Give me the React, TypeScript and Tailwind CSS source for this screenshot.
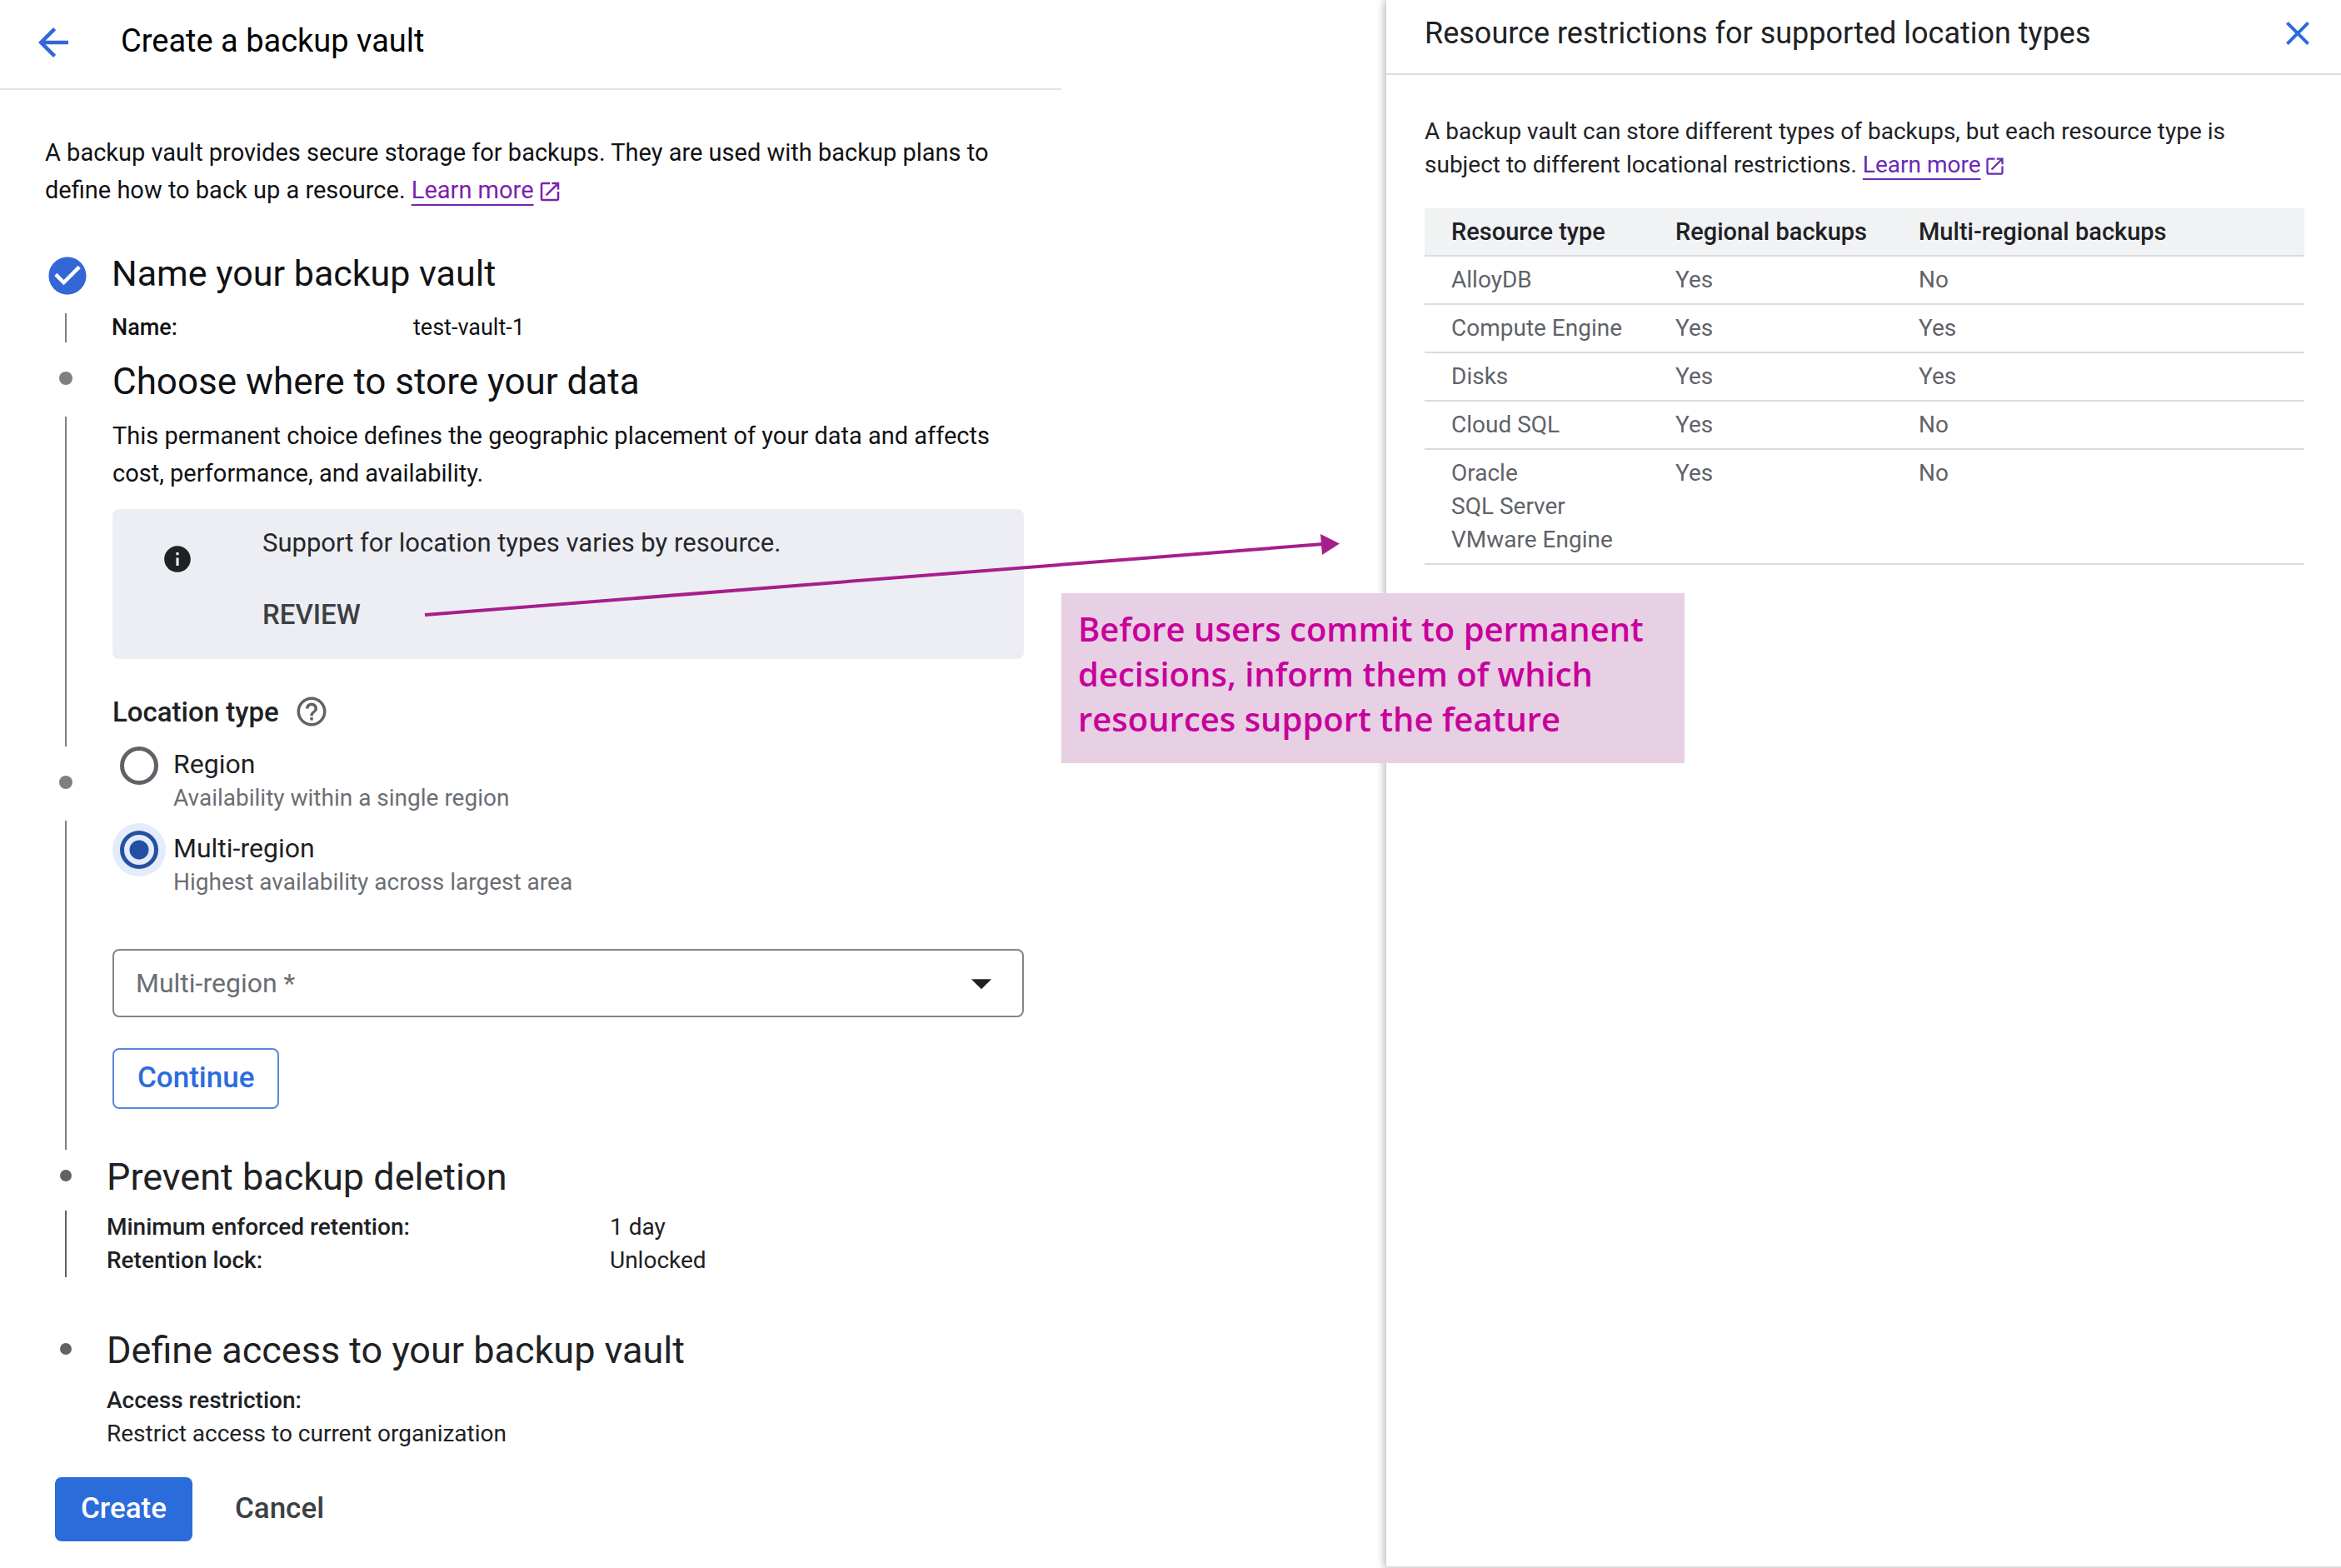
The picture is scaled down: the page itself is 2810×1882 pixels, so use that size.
import { useState } from 'react';
import type { ReactNode } from 'react';
import {
  MdArrowBack,
  MdArrowDropDown,
  MdCheckCircle,
  MdClose,
  MdHelpOutline,
  MdInfo,
  MdOpenInNew,
} from 'react-icons/md';

const locationTypes = [
  { id: 'region', label: 'Region', hint: 'Availability within a single region' },
  { id: 'multi-region', label: 'Multi-region', hint: 'Highest availability across largest area' },
];

const restrictions = [
  { resources: ['AlloyDB'], regional: 'Yes', multiRegional: 'No' },
  { resources: ['Compute Engine'], regional: 'Yes', multiRegional: 'Yes' },
  { resources: ['Disks'], regional: 'Yes', multiRegional: 'Yes' },
  { resources: ['Cloud SQL'], regional: 'Yes', multiRegional: 'No' },
  { resources: ['Oracle', 'SQL Server', 'VMware Engine'], regional: 'Yes', multiRegional: 'No' },
];

const LearnMore = ({ className, iconClassName }: { className: string; iconClassName: string }) => (
  <a href="#learn-more" className={`whitespace-nowrap ${className}`}>
    <span className="underline decoration-2 underline-offset-[7px] [text-decoration-skip-ink:none]">Learn more</span>
    <MdOpenInNew className={`ml-1 inline ${iconClassName}`} />
  </a>
);

const Step = ({
  title,
  rail,
  className,
  children,
}: {
  title: string;
  rail: ReactNode;
  className: string;
  children: ReactNode;
}) => (
  <section className={`flex ${className}`}>
    <div className="flex w-[50px] shrink-0 flex-col items-center">{rail}</div>
    <div className="min-w-0 flex-1">
      <h2 className="leading-[56px]">{title}</h2>
      {children}
    </div>
  </section>
);

const Detail = ({ name, value }: { name: string; value: string }) => (
  <>
    <dt className="font-medium">{name}</dt>
    <dd>{value}</dd>
  </>
);

const VaultForm = () => {
  const [locationType, setLocationType] = useState('multi-region');

  return (
    <main className="text-[29px] text-[#111214]">
      <header className="flex h-[108px] items-center gap-[54px] border-b-2 border-[#e3e4e6] pb-1 pl-[37px]">
        <button type="button" aria-label="Back" className="text-[#3367d6]">
          <MdArrowBack className="size-[54px]" />
        </button>
        <h1 className="pb-1 text-[38px] leading-[48px] text-black">Create a backup vault</h1>
      </header>

      <form className="pr-[45px] pb-[30px] pl-[54px]" onSubmit={(e) => e.preventDefault()}>
        <p className="pt-[53px] leading-[45px]">
          A backup vault provides secure storage for backups. They are used with backup plans to
          define how to back up a resource.{' '}
          <LearnMore className="text-[#7b22ad]" iconClassName="size-[30px]" />
        </p>

        <div className="pt-[49px]">
          <Step
            title="Name your backup vault"
            className="gap-[30px] text-[43px]"
            rail={
              <>
                <MdCheckCircle className="mt-1 ml-1 size-[54px] shrink-0 text-[#3367d6]" />
                <span className="mt-[18px] mb-[19px] w-[2px] flex-1 bg-[#808080]" />
              </>
            }
          >
            <dl className="grid grid-cols-[362px_1fr] pt-[17px] pb-[17px] text-[27px] leading-[40px]">
              <Detail name="Name:" value="test-vault-1" />
            </dl>
          </Step>

          <Step
            title="Choose where to store your data"
            className="gap-[31px] text-[44px]"
            rail={
              <>
                <span className="mt-4 size-4 rounded-full bg-[#808080]" />
                <span className="mt-[38px] mb-[35px] w-[2px] flex-1 bg-[#808080]" />
                <span className="size-4 rounded-full bg-[#808080]" />
                <span className="mt-[38px] mb-[5px] w-[2px] flex-1 bg-[#808080]" />
              </>
            }
          >
            <p className="pt-[15px] pb-5 text-[29px] leading-[45px]">
              This permanent choice defines the geographic placement of your data and affects cost,
              performance, and availability.
            </p>

            <div className="flex gap-[83px] rounded-lg bg-[#edeef3] pt-[21px] pb-[33px] pl-[59px] text-[#26272b]">
              <MdInfo className="mt-5 size-[38px] text-[#202124]" />
              <div className="flex flex-col items-start gap-[46px] text-[31px] leading-[40px]">
                <p>Support for location types varies by resource.</p>
                <button type="button" className="text-[33px] font-medium text-[#3c4043]">
                  REVIEW
                </button>
              </div>
            </div>

            <fieldset className="mt-[42px] text-[#202124]">
              <legend className="text-[33px] leading-[40px] font-medium">
                Location type
                <button type="button" aria-label="Help" className="ml-[18px] align-bottom text-[#5f6368]">
                  <MdHelpOutline className="size-[42px]" />
                </button>
              </legend>
              <div className="flex flex-col gap-[19px] pt-[21px]">
                {locationTypes.map(({ id, label, hint }) => (
                  <div key={id} className="flex gap-[18px] pl-[9px]">
                    <input
                      type="radio"
                      id={id}
                      name="location-type"
                      checked={locationType === id}
                      onChange={() => setLocationType(id)}
                      className="size-[46px] shrink-0 appearance-none rounded-full border-[5px] border-[#5f6368] checked:border-[#2450a4] checked:bg-[radial-gradient(circle,#2450a4_11px,#e4ecfb_12px)] checked:ring-9 checked:ring-[#e4ecfb]"
                    />
                    <label htmlFor={id}>
                      <span className="block text-[32px] leading-[42px]">{label}</span>
                      <span className="block text-[28px] leading-[40px] text-[#6b6e73]">{hint}</span>
                    </label>
                  </div>
                ))}
              </div>
            </fieldset>

            <div className="relative mt-[60px]">
              <select
                aria-label="Multi-region"
                defaultValue=""
                className="block h-[82px] w-full appearance-none rounded-lg border-2 border-[#80868b] bg-white pl-[26px] text-[32px] text-[#6b6e73]"
              >
                <option value="">Multi-region *</option>
                <option value="us">us</option>
                <option value="eu">eu</option>
              </select>
              <MdArrowDropDown className="pointer-events-none absolute top-3 right-[22px] size-[58px] text-[#202124]" />
            </div>

            <div className="flex pt-[37px] pb-[54px]">
              <button
                type="button"
                className="h-[73px] rounded-lg border-2 border-[#5b85d9] px-7 text-[35px] font-medium text-[#2b6cdb]"
              >
                Continue
              </button>
            </div>
          </Step>

          <Step
            title="Prevent backup deletion"
            className="gap-6 text-[45px] text-[#202124]"
            rail={
              <>
                <span className="mt-[19px] size-[14px] rounded-full bg-[#5f6368]" />
                <span className="mt-[35px] mb-[60px] w-[2px] flex-1 bg-[#5f6368]" />
              </>
            }
          >
            <dl className="grid grid-cols-[604px_1fr] pt-3 pb-[60px] text-[28px] leading-[40px]">
              <Detail name="Minimum enforced retention:" value="1 day" />
              <Detail name="Retention lock:" value="Unlocked" />
            </dl>
          </Step>

          <Step
            title="Define access to your backup vault"
            className="gap-6 text-[45px] text-[#202124]"
            rail={<span className="mt-[19px] size-[14px] rounded-full bg-[#5f6368]" />}
          >
            <dl className="pt-3 text-[28px] leading-[40px]">
              <Detail name="Access restriction:" value="Restrict access to current organization" />
            </dl>
          </Step>
        </div>

        <div className="flex gap-5 pt-[32px] pl-3 text-[35px] font-medium">
          <button type="submit" className="h-[77px] rounded-lg bg-[#2b6cdb] px-[31px] text-white">
            Create
          </button>
          <button type="button" className="h-[77px] px-[31px] text-[#3c4043]">
            Cancel
          </button>
        </div>
      </form>
    </main>
  );
};

const RestrictionsPanel = () => (
  <aside className="border-b-2 border-[#dadce0] bg-white text-[28px] text-[#202124] shadow-[-2px_0_10px_rgba(0,0,0,0.3)]">
    <header className="flex h-[90px] items-center justify-between border-b-2 border-[#dadce0] pr-7 pb-2 pl-[46px]">
      <h2 className="text-[36px] leading-[48px]">Resource restrictions for supported location types</h2>
      <button type="button" aria-label="Close" className="text-[#2b6cdb]">
        <MdClose className="size-12" />
      </button>
    </header>
    <div className="pt-12 pr-11 pl-[46px]">
      <p className="max-w-[1000px] pb-8 leading-[40px]">
        A backup vault can store different types of backups, but each resource type is subject to
        different locational restrictions.{' '}
        <LearnMore className="text-[#6929b8]" iconClassName="size-[27px]" />
      </p>
      <table className="w-full table-fixed border-collapse text-left leading-[40px]">
        <thead className="text-[29px]">
          <tr className="border-b-2 border-[#dadce0] bg-[#f1f2f4]">
            <th className="w-[269px] py-2 pl-8 font-medium">Resource type</th>
            <th className="w-[324px] py-2 pl-8 font-medium">Regional backups</th>
            <th className="py-2 font-medium">Multi-regional backups</th>
          </tr>
        </thead>
        <tbody className="text-[#5f6368]">
          {restrictions.map(({ resources, regional, multiRegional }) => (
            <tr key={resources[0]} className="border-b-2 border-[#dadce0] align-top">
              <td className="py-2 pl-8">
                {resources.map((resource) => (
                  <div key={resource}>{resource}</div>
                ))}
              </td>
              <td className="py-2 pl-8">{regional}</td>
              <td className="py-2">{multiRegional}</td>
            </tr>
          ))}
        </tbody>
      </table>
    </div>
  </aside>
);

// Callout that points from the REVIEW action to the panel it opens
const Annotation = () => (
  <>
    <svg
      className="pointer-events-none absolute top-[635px] left-[508px] h-[108px] w-[1102px]"
      viewBox="0 0 1102 108"
      fill="#a61e8c"
    >
      <path d="M2 103 1080 18" stroke="#a61e8c" strokeWidth="4" />
      <path d="M1077 6 1100 17.500 1079 31z" />
    </svg>
    <div className="absolute top-[712px] left-[1274px] w-[748px] bg-[#e6cde2]/95 px-[20px] pt-[16px] pb-[26px] font-['Open_Sans',sans-serif] text-[40px] leading-[54px] font-semibold text-[#c8009c]">
      Before users commit to permanent decisions, inform them of which resources support the feature
    </div>
  </>
);

export default function App() {
  return (
    <div className="relative grid min-h-screen grid-cols-[1274fr_390fr_1146fr] overflow-hidden bg-white font-[Roboto,sans-serif]">
      <VaultForm />
      <div />
      <RestrictionsPanel />
      <Annotation />
    </div>
  );
}
